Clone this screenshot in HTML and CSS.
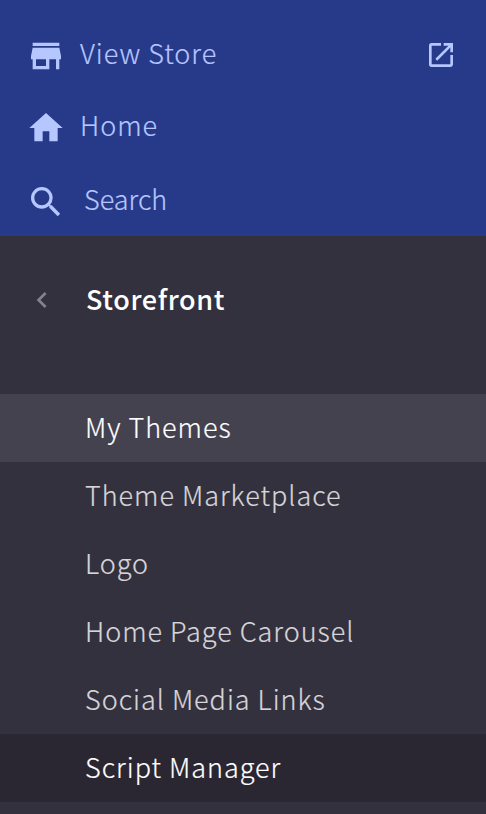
FILE: index.html
```html
<!DOCTYPE html>
<html lang="en">
<head>
<meta charset="utf-8">
<title>Storefront</title>
<link rel="stylesheet" href="styles.css">
</head>
<body>
<nav class="sidebar">
  <div class="primary">
    <a class="link store">
      <svg class="icon" viewBox="0 0 24 24"><path d="M20 4H4v2h16V4zm1 10v-2l-1-5H4l-1 5v2h1v6h10v-6h4v6h2v-6h1zm-9 4H6v-4h6v4z"/></svg>
      <span class="label">View Store</span>
      <svg class="external" viewBox="0 0 24 24"><path d="M19 19H5V5h7V3H5a2 2 0 0 0-2 2v14a2 2 0 0 0 2 2h14c1.100 0 2-.9 2-2v-7h-2v7zM14 3v2h3.590l-9.830 9.830 1.410 1.410L19 6.410V10h2V3h-7z"/></svg>
    </a>
    <a class="link home">
      <svg class="icon" viewBox="0 0 24 24"><path d="M10 20v-6h4v6h5v-8h3L12 3 2 12h3v8z"/></svg>
      <span class="label">Home</span>
    </a>
    <a class="link search">
      <svg class="icon" viewBox="0 0 24 24"><path d="M15.500 14h-.79l-.28-.27A6.471 6.471 0 0 0 16 9.500 6.500 6.500 0 1 0 9.500 16c1.610 0 3.090-.59 4.230-1.570l.27.28v.79l5 4.990L20.490 19l-4.990-5zm-6 0C7.010 14 5 11.990 5 9.500S7.010 5 9.500 5 14 7.010 14 9.500 11.990 14 9.500 14z"/></svg>
      <span class="label">Search</span>
    </a>
  </div>
  <div class="heading">
    <svg class="back" viewBox="0 0 24 24"><path d="M15.410 7.410L14 6l-6 6 6 6 1.410-1.410L10.830 12z"/></svg>
    <span class="title">Storefront</span>
  </div>
  <div class="menu">
    <a class="item current"><span>My Themes</span></a>
    <a class="item"><span>Theme Marketplace</span></a>
    <a class="item"><span>Logo</span></a>
    <a class="item"><span>Home Page Carousel</span></a>
    <a class="item"><span>Social Media Links</span></a>
    <a class="item pressed"><span>Script Manager</span></a>
  </div>
</nav>
</body>
</html>
```
FILE: styles.css
```css
* { box-sizing: border-box; }
body {
  margin: 0;
  background: #34313f;
  font: 300 27px/40px "Noto Sans CJK SC", "Noto Sans", sans-serif;
  letter-spacing: 0.98px;
  -webkit-text-stroke: 0.2px currentColor;
}
.sidebar { height: 814px; overflow: hidden; }
.primary {
  height: 236px;
  padding: 36px 29px 0 26px;
  background: #273a8a;
  color: #b6c6ff;
}
.link { display: flex; height: 40px; }
.home { margin-top: 32px; }
.search { margin-top: 34px; }
.icon { width: 40px; height: 40px; fill: currentColor; }
.label { margin-left: 14px; line-height: 34px; white-space: nowrap; }
.search .label { margin-left: 18px; letter-spacing: 0; }
.external { width: 32px; height: 32px; margin: 3px 0 0 auto; fill: currentColor; }
.heading {
  display: flex;
  height: 158px;
  padding: 44px 0 0 26px;
  color: #fff;
  font-weight: 500;
  letter-spacing: 0.65px;
  -webkit-text-stroke: 0;
}
.back { width: 32px; height: 32px; margin-top: 4px; fill: #85828d; }
.title { margin-left: 28px; line-height: 38px; }
.item {
  display: flex;
  align-items: center;
  height: 68px;
  padding: 0 0 2px 85px;
  color: #d6d5d9;
  white-space: nowrap;
}
.current { background: #45424f; color: #fff; }
.pressed { background: #2b2732; color: #fff; }
```
